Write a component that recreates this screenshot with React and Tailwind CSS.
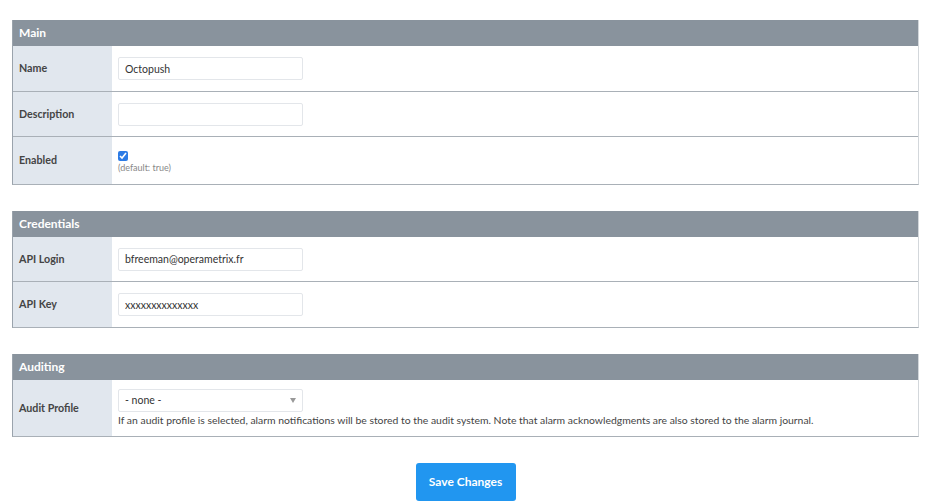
import React, { useState } from 'react';

const font = { fontFamily: '"Source Sans Pro", Lato, "Open Sans", sans-serif' };

function Section({ title, children }) {
  return (
    <div className="border-l border-l-[#9aa3ac] border-r border-r-[#d3d7db] border-b border-b-[#a9b0b7]">
      <div className="h-[26px] bg-[#89939d] px-[6px] flex items-center text-[12px] font-bold text-white">
        {title}
      </div>
      {children}
    </div>
  );
}

function Row({ label, last, height, children }) {
  return (
    <div className={`flex ${last ? '' : 'border-b border-[#a9b0b7]'}`} style={{ minHeight: height }}>
      <div className="w-[99px] shrink-0 bg-[#e1e7ee] px-[6px] flex items-center text-[10.7px] font-bold text-[#444]">
        {label}
      </div>
      <div className="flex-1 bg-white px-[6px] flex flex-col justify-center">{children}</div>
    </div>
  );
}

function TextInput({ value }) {
  const [v, setV] = useState(value);
  return (
    <input
      type="text"
      value={v}
      onChange={(e) => setV(e.target.value)}
      className="w-[185px] h-[23px] border border-[#e3e6ea] rounded-[2px] px-[6px] text-[10.5px] text-[#333] outline-none"
    />
  );
}

export default function App() {
  const [enabled, setEnabled] = useState(true);
  return (
    <div className="bg-white w-[931px] h-[502px] pt-[20px] px-[12px] text-[#333]" style={font}>
      <div className="w-[907px] flex flex-col gap-[26px]">
        <Section title="Main">
          <Row label="Name" height={46}>
            <TextInput value="Octopush" />
          </Row>
          <Row label="Description" height={45}>
            <TextInput value="" />
          </Row>
          <Row label="Enabled" last height={47}>
            <div className="pt-[4px]">
              <input
                type="checkbox"
                checked={enabled}
                onChange={(e) => setEnabled(e.target.checked)}
                className="w-[10px] h-[10px] m-0 block accent-[#2c7be5]"
              />
              <div className="text-[9px] text-[#888] mt-[1px] leading-[12px]">(default: true)</div>
            </div>
          </Row>
        </Section>
        <Section title="Credentials">
          <Row label="API Login" height={45}>
            <TextInput value="bfreeman@operametrix.fr" />
          </Row>
          <Row label="API Key" last height={45}>
            <TextInput value="xxxxxxxxxxxxxx" />
          </Row>
        </Section>
        <Section title="Auditing">
          <Row label="Audit Profile" last height={56}>
            <div className="relative w-[185px] h-[23px] border border-[#e3e6ea] rounded-[2px] bg-white flex items-center px-[6px] text-[10.5px] text-[#333]">
              <span>- none -</span>
              <span className="absolute right-[6px] top-[8px] w-0 h-0 border-l-[3.5px] border-r-[3.5px] border-t-[5px] border-l-transparent border-r-transparent border-t-[#999]" />
            </div>
            <div className="text-[10.4px] text-[#444] mt-[2px] leading-[13px]">
              If an audit profile is selected, alarm notifications will be stored to the audit system. Note that alarm acknowledgments are also stored to the alarm journal.
            </div>
          </Row>
        </Section>
        <div className="flex justify-center">
          <button className="w-[100px] h-[38px] rounded-[3px] bg-[#2196f0] text-white text-[12px] font-bold">
            Save Changes
          </button>
        </div>
      </div>
    </div>
  );
}
